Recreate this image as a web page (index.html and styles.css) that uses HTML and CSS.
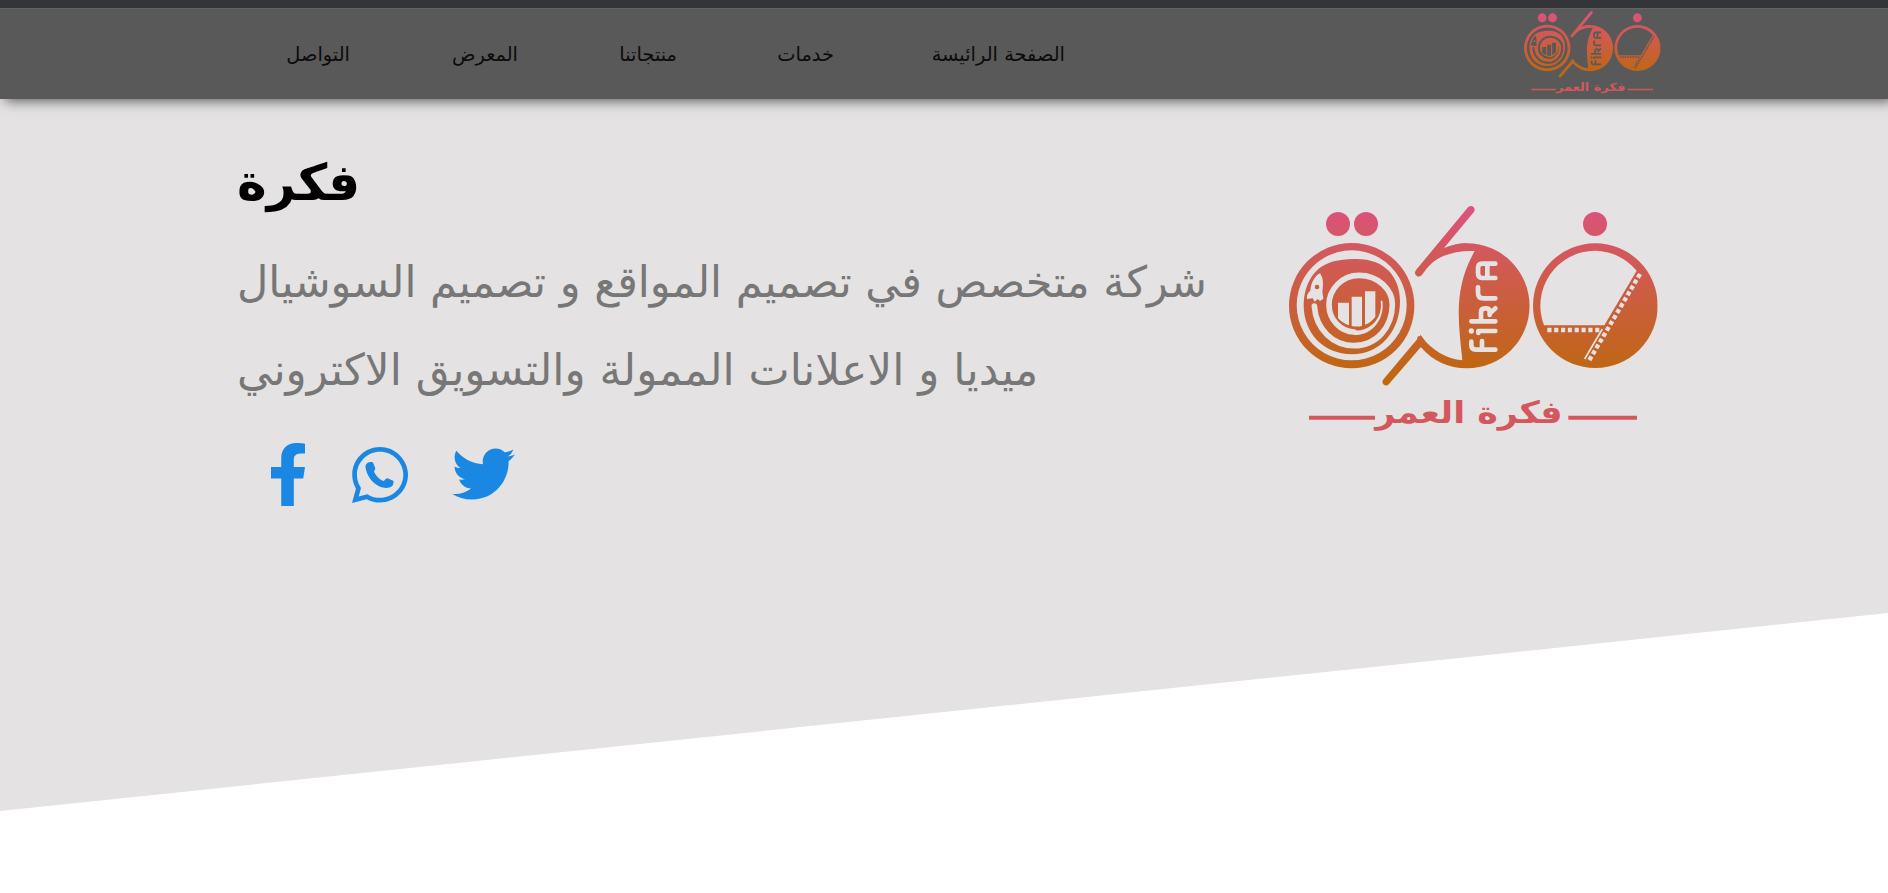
FILE: index.html
```html
<!DOCTYPE html>
<html lang="ar">
<head>
<meta charset="utf-8">
<title>فكرة</title>
<link rel="stylesheet" href="styles.css">
</head>
<body>
<svg class="defs" width="0" height="0" aria-hidden="true">
  <defs>
    <linearGradient id="brand" gradientUnits="userSpaceOnUse" x1="0" y1="50" x2="0" y2="585">
      <stop offset="0" stop-color="#dc527e"/>
      <stop offset="0.25" stop-color="#d3585d"/>
      <stop offset="0.9" stop-color="#c06616"/>
      <stop offset="1" stop-color="#bd6a10"/>
    </linearGradient>
    <mask id="cut-left" maskUnits="userSpaceOnUse" x="0" y="0" width="1200" height="780">
      <rect width="1200" height="780" fill="#fff"/>
      <path d="M245 182a165 165 0 1 0 .1 0zM250 208C345 204 390 262 390 335C390 425 330 494 246 494C160 494 101 430 101 347C101 300 118 262 145 238C172 216 205 209 250 208z" fill="#000" fill-rule="evenodd"/>
      <path d="M133 349C138 420 190 468 252 468C320 468 367 412 367 344C367 300 325 257 267 257C215 257 177 300 177 345C177 392 213 426 252 427" fill="none" stroke="#000" stroke-width="17" stroke-linecap="round"/>
      <path d="M332 333C339 385 303 424 252 423V436C310 437 345 385 337 333z" fill="#000"/>
      <path d="M204 339h33v68q-20-6-33-22zM245 321h31v88q-15 3-31 0zM285 305h31v76q-12 17-31 24z" fill="#000"/>
      <path d="M150 251C161 265 160 288 157 306L160 327L150 334L143 328L134 336L128 326L111 328C110 314 115 308 121 303C123 282 132 260 150 251z" fill="#000"/>
      <circle cx="141" cy="292" r="7" fill="#fff"/>
    </mask>
    <mask id="cut-middle" maskUnits="userSpaceOnUse" x="0" y="0" width="1200" height="780">
      <rect width="1200" height="780" fill="#fff"/>
      <path d="M442 262C480 213 530 181 614 184C548 300 566 400 577 512C530 507 485 482 452 438L400 455V262z" fill="#000"/>
      <g fill="none" stroke="#000" stroke-width="14" stroke-linejoin="round" stroke-linecap="round">
        <path d="M676 480H617Q604 480 604 467V456M636 477V454M676 424H625V430M676 395H604M633 392V368Q633 356 645 356H650Q659 356 659 368V376M659 372L676 356M676 326H640Q624 326 624 310V293M676 265H636Q624 265 624 250V236Q624 222 636 222H676M652 262V225"/>
      </g>
      <circle cx="604" cy="424" r="8" fill="#000"/>
    </mask>
    <mask id="cut-right" maskUnits="userSpaceOnUse" x="0" y="0" width="1200" height="780">
      <rect width="1200" height="780" fill="#fff"/>
      <path d="M1100 243L1003 407H822A165 165 0 0 1 976 183A165 165 0 0 1 1100 243z" fill="#000"/>
      <path d="M832 421H995M1110 253L957 513" stroke="#000" stroke-width="13" stroke-dasharray="12.5 8"/>
      <path d="M997 418L944 508" stroke="#000" stroke-width="5"/>
    </mask>
    <symbol id="logo" viewBox="57 40 1106 690">
      <g fill="url(#brand)">
        <circle cx="204" cy="103" r="36"/><circle cx="288" cy="103" r="36"/><circle cx="975" cy="103" r="36"/>
        <circle cx="245" cy="348" r="188" mask="url(#cut-left)"/>
        <path mask="url(#cut-middle)" d="M442 262C480 195 530 161 591 161A187 187 0 1 1 591 536C535 536 490 515 452 472L442 455z"/>
        <circle cx="976" cy="348" r="187" mask="url(#cut-right)"/>
        <path d="M452 436L466 455L452 473L357 583Q348 592 340 584Q334 577 341 568z"/>
        <path d="M594 53Q603 45 611 53Q617 60 611 68L522 175Q555 161 591 161V183Q505 179 455 257Q446 265 437 256Q432 249 438 241z"/>
      </g>
      <g fill="#d3585d">
        <path d="M117 678H315V690H117zM895 678H1101V690H895z"/>
        <text class="logo-tag" x="597" y="699" text-anchor="middle" textLength="562" lengthAdjust="spacingAndGlyphs">فكرة العمر</text>
      </g>
    </symbol>
  </defs>
</svg>
<header class="topbar">
  <nav class="menu">
    <a class="m1">التواصل</a><a class="m2">المعرض</a><a class="m3">منتجاتنا</a><a class="m4">خدمات</a><a class="m5">الصفحة الرائيسة</a>
  </nav>
  <svg class="logo-small"><use href="#logo"/></svg>
</header>
<main class="hero">
  <section class="intro">
    <h1>فكرة</h1>
    <p><span class="l1">شركة متخصص في تصميم المواقع و تصميم السوشيال</span><span class="l2">ميديا و الاعلانات الممولة والتسويق الاكتروني</span></p>
    <div class="social">
      <svg class="fb" viewBox="22.9 0 270.5 512" preserveAspectRatio="none"><path d="M279.14 288l14.22-92.66h-88.91v-60.13c0-25.35 12.42-50.06 52.24-50.06h40.42V6.26S260.43 0 225.36 0c-73.22 0-121.08 44.38-121.08 124.72v70.62H22.89V288h81.39v224h100.17V288z"/></svg>
      <svg class="wa" viewBox="0 32 448 448"><path d="M380.9 97.1C339 55.1 283.2 32 223.9 32c-122.4 0-222 99.6-222 222 0 39.1 10.2 77.3 29.6 111L0 480l117.7-30.9c32.4 17.7 68.9 27 106.1 27h.1c122.3 0 224.1-99.6 224.1-222 0-59.3-25.2-115-67.1-157zm-157 341.6c-33.2 0-65.7-8.9-94-25.7l-6.7-4-69.8 18.3L72 359.2l-4.4-7c-18.5-29.4-28.2-63.3-28.2-98.2 0-101.7 82.8-184.5 184.6-184.5 49.3 0 95.6 19.2 130.4 54.1 34.8 34.9 56.2 81.2 56.1 130.5 0 101.8-84.9 184.6-186.6 184.6z"/><path d="M146 151C121 151 102 177 110 205C125 280 188 350 262 358C295 364 330 350 332 318Q336 300 326 299L284 282Q276 280 270 288L254 304C222 296 192 263 176 230Q174 225 180 220Q190 208 185 198L169 158Q166 151 158 151z"/></svg>
      <svg class="tw" viewBox="0 48 512 416"><path d="M459.37 151.716c.325 4.548.325 9.097.325 13.645 0 138.72-105.583 298.558-298.558 298.558-59.452 0-114.68-17.219-161.137-47.106 8.447.974 16.568 1.299 25.34 1.299 49.055 0 94.213-16.568 130.274-44.832-46.132-.975-84.792-31.188-98.112-72.772 6.498.974 12.995 1.624 19.818 1.624 9.421 0 18.843-1.3 27.614-3.573-48.081-9.747-84.143-51.98-84.143-102.985v-1.299c13.969 7.797 30.214 12.67 47.431 13.319-28.264-18.843-46.781-51.005-46.781-87.391 0-19.492 5.197-37.36 14.294-52.954 51.655 63.675 129.3 105.258 216.365 109.807-1.624-7.797-2.599-15.918-2.599-24.04 0-57.828 46.782-104.934 104.934-104.934 30.213 0 57.502 12.67 76.67 33.137 23.715-4.548 46.456-13.32 66.599-25.34-7.798 24.366-24.366 44.833-46.132 57.827 21.117-2.273 41.584-8.122 60.426-16.243-14.292 20.791-32.161 39.308-52.628 54.253z"/></svg>
    </div>
  </section>
  <svg class="logo-big"><use href="#logo"/></svg>
</main>
</body>
</html>
```
FILE: styles.css
```css
* { box-sizing: border-box; }
body {
  margin: 0;
  height: 893px;
  overflow: hidden;
  background: #fff;
  font-family: "DejaVu Sans", sans-serif;
}
.defs { position: absolute; }
.topbar {
  position: relative;
  z-index: 1;
  height: 99px;
  display: flex;
  justify-content: space-between;
  padding: 0 227px 0 287px;
  border-top: 8px solid #343539;
  background: #595959;
  box-shadow: 5px 2px 12px rgba(0, 0, 0, 0.6), inset 0 1px 0 #626464;
}
.menu {
  display: flex;
  gap: 101px;
  height: 91px;
  padding-top: 1px;
  line-height: 91px;
  font-size: 19.4px;
  color: #0c0c0c;
}
.menu a { white-space: nowrap; direction: rtl; }
.m1 { width: 63px; }
.m2 { width: 67px; }
.m3 { width: 58px; }
.m4 { width: 56px; }
.m5 { width: 130px; }
.logo-small { width: 136.6px; height: 85.2px; margin-top: 2px; }
.hero {
  height: 712px;
  display: flex;
  justify-content: space-between;
  padding: 0 230px 0 237px;
  background: #e4e2e2;
  clip-path: polygon(0 0, 100% 0, 100% 514px, 0 100%);
}
.intro { padding-top: 44px; }
h1 {
  margin: 0;
  height: 95px;
  line-height: 80px;
  font-size: 50.3px;
  font-weight: 700;
  color: #000;
}
p { margin: 0; line-height: 88px; color: #777; }
p span { display: block; width: max-content; white-space: nowrap; direction: rtl; }
.l1 { font-size: 43.1px; }
.l2 { font-size: 43.7px; }
.social {
  display: flex;
  align-items: flex-start;
  padding: 29px 0 0 34px;
  fill: #1a88e3;
}
.fb { width: 34px; height: 63px; }
.wa { width: 56px; height: 56px; margin: 4px 0 0 47px; }
.tw { width: 63px; height: 52px; margin: 5px 0 0 44px; }
.logo-big { width: 368.7px; height: 230px; margin-top: 104px; }
.logo-tag { font: 700 92px "DejaVu Sans", sans-serif; }
```
